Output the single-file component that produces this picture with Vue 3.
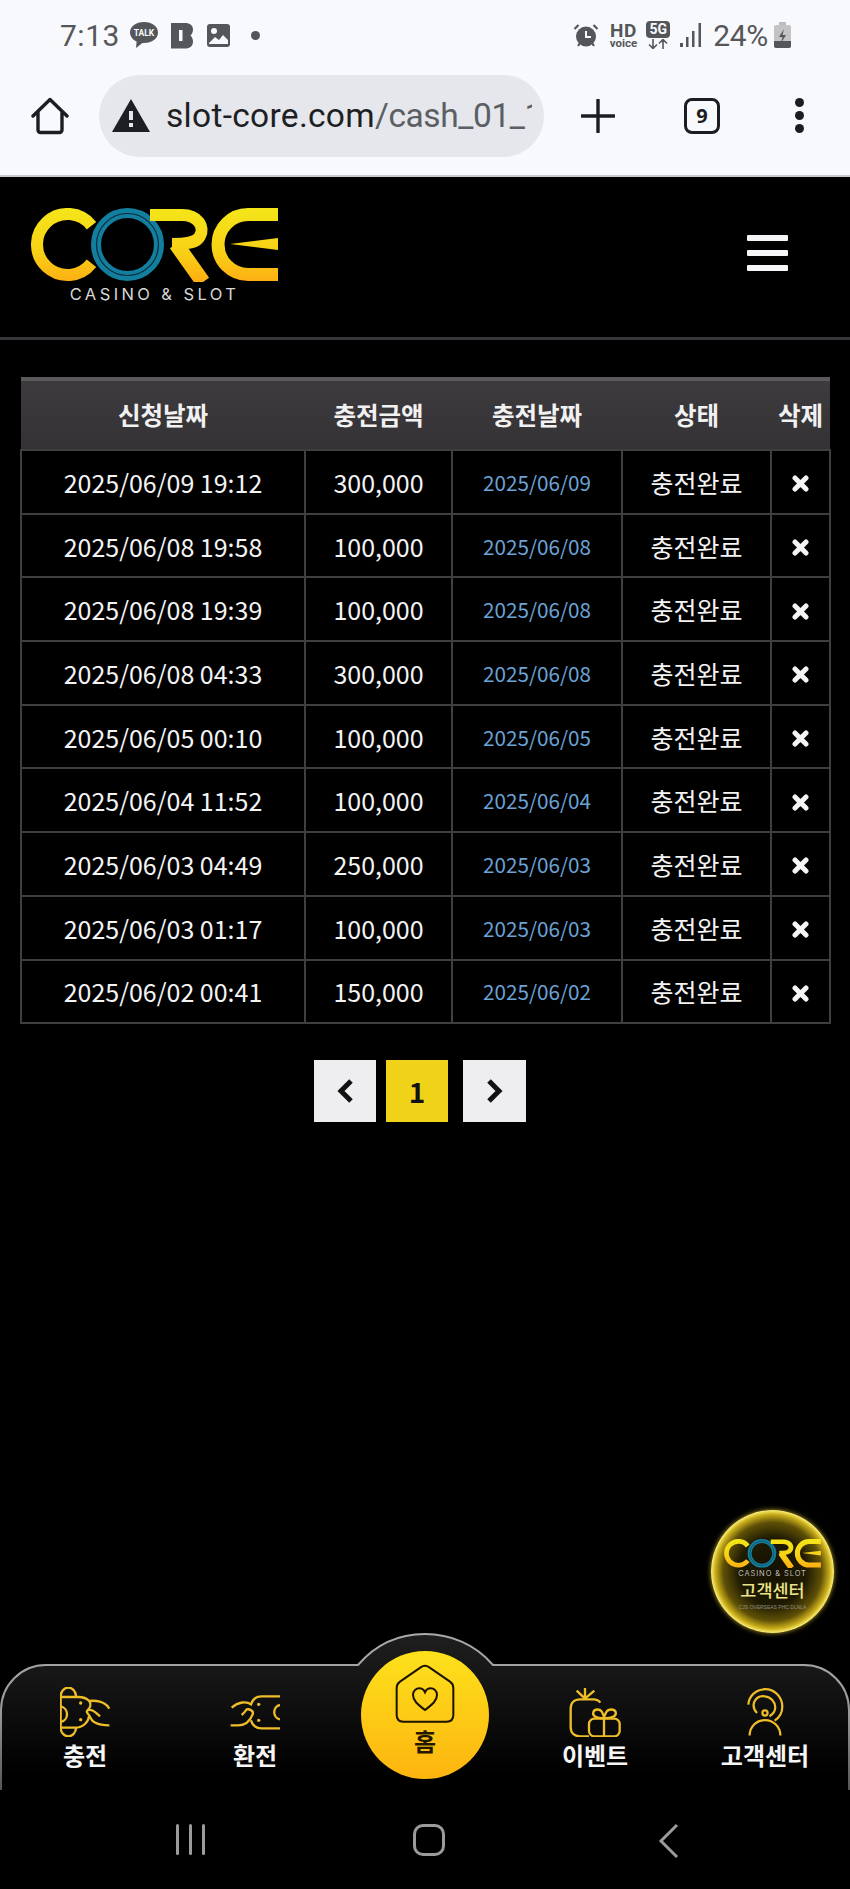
<script setup>
const rows = [
  { applied: '2025/06/09 19:12', amount: '300,000', charged: '2025/06/09' },
  { applied: '2025/06/08 19:58', amount: '100,000', charged: '2025/06/08' },
  { applied: '2025/06/08 19:39', amount: '100,000', charged: '2025/06/08' },
  { applied: '2025/06/08 04:33', amount: '300,000', charged: '2025/06/08' },
  { applied: '2025/06/05 00:10', amount: '100,000', charged: '2025/06/05' },
  { applied: '2025/06/04 11:52', amount: '100,000', charged: '2025/06/04' },
  { applied: '2025/06/03 04:49', amount: '250,000', charged: '2025/06/03' },
  { applied: '2025/06/03 01:17', amount: '100,000', charged: '2025/06/03' },
  { applied: '2025/06/02 00:41', amount: '150,000', charged: '2025/06/02' }
]
</script>

<template>
  <div class="page">
    <!-- phone status bar -->
    <div class="statusbar">
      <div class="status-left">
        <span class="clock">7:13</span>
        <svg class="ic-talk" width="30" height="28" viewBox="0 0 30 28">
          <path d="M15 1C7 1 1 5.600 1 11.500c0 3.900 2.800 7.200 6.600 9L7 27l6.400-5h1.600c8 0 14-4.600 14-10.500S23 1 15 1z" fill="#555659" />
          <text x="15" y="15" text-anchor="middle" class="talk-text">TALK</text>
        </svg>
        <svg class="ic-band" width="22" height="27" viewBox="0 0 22 27">
          <path d="M0 1h14c5 0 8 2.500 8 6.500 0 2.500-1 4.500-2.500 6 1.500 1.500 2.500 3.500 2.500 6 0 4.500-3 7-8 7H0z" fill="#555659" />
          <rect x="8" y="8" width="3.500" height="11" fill="#f8f9fd" />
        </svg>
        <svg class="ic-photo" width="25" height="25" viewBox="0 0 25 25">
          <rect x="1" y="1" width="23" height="23" rx="3" fill="#555659" />
          <circle cx="8" cy="8" r="3" fill="#f8f9fd" />
          <path d="M3 20l6-6 4 3 4-5 5 5v4H3z" fill="#f8f9fd" />
        </svg>
        <span class="dot"></span>
      </div>
      <div class="status-right">
        <svg width="26" height="25" viewBox="0 0 26 25">
          <circle cx="13" cy="13.500" r="10" fill="#555659" />
          <path d="M13 8v6h5" fill="none" stroke="#f8f9fd" stroke-width="2" />
          <path d="M1.500 6l4-4M24.500 6l-4-4M5 23l2-3M21 23l-2-3" stroke="#555659" stroke-width="2.200" />
        </svg>
        <div class="hd"><b>HD</b><span>voice</span></div>
        <div class="fiveg">
          <b>5G</b>
          <svg width="22" height="10" viewBox="0 0 22 10">
            <path d="M6 0v9M2 5.500L6 9.500l4-4M16 10V1M12 4.500L16 .5l4 4" fill="none" stroke="#555659" stroke-width="1.600" />
          </svg>
        </div>
        <svg width="22" height="24" viewBox="0 0 22 24">
          <rect x="0" y="20" width="3" height="4" fill="#555659" />
          <rect x="6" y="14" width="2.500" height="10" fill="#555659" />
          <rect x="12" y="8" width="2.500" height="16" fill="#555659" />
          <rect x="18.500" y="0" width="2.500" height="24" fill="#555659" />
        </svg>
        <span class="battery-text">24%</span>
        <svg width="17" height="26" viewBox="0 0 17 26">
          <rect x="5" y="0" width="7" height="3" fill="#bdbdbf" />
          <rect x="0" y="3" width="17" height="23" rx="2" fill="#c3c3c5" />
          <path d="M0 19h17v5a2 2 0 0 1-2 2H2a2 2 0 0 1-2-2z" fill="#555659" />
          <path d="M10 7l-5 8h3.500L7 21l5-8H8.500z" fill="#555659" />
        </svg>
      </div>
    </div>

    <!-- browser toolbar -->
    <div class="toolbar">
      <svg class="tb-home" width="38" height="38" viewBox="0 0 38 38">
        <path d="M2 19L19 2.500 36 19M7 15v18a2.500 2.500 0 0 0 2.500 2.500h19a2.500 2.500 0 0 0 2.500-2.500V15" fill="none" stroke="#1c1d20" stroke-width="3.400" stroke-linejoin="round" stroke-linecap="round" />
      </svg>
      <div class="urlbar">
        <svg width="38" height="33" viewBox="0 0 38 33">
          <path d="M19 0l19 33H0z" fill="#1e1f23" />
          <rect x="17" y="12" width="4" height="9" fill="#e5e7ec" />
          <rect x="17" y="24" width="4" height="4" fill="#e5e7ec" />
        </svg>
        <span class="url"><span class="url-host">slot-core.com</span>/cash_01_1</span>
      </div>
      <svg class="tb-plus" width="34" height="34" viewBox="0 0 34 34">
        <path d="M17 1v32M1 17h32" stroke="#1c1d20" stroke-width="3.400" stroke-linecap="round" />
      </svg>
      <div class="tabs">9</div>
      <div class="kebab"><i></i><i></i><i></i></div>
    </div>

    <!-- site header -->
    <header class="site-header">
      <div class="logo">
        <svg width="247" height="74" viewBox="31 207 247 74">
          <defs>
            <linearGradient id="goldLogo" gradientUnits="userSpaceOnUse" x1="0" y1="207" x2="0" y2="281">
              <stop offset="0" stop-color="#f4e619" />
              <stop offset="0.6" stop-color="#f8d016" />
              <stop offset="1" stop-color="#fdae12" />
            </linearGradient>
            <g id="coreMark">
              <path d="M91.500 224.700A30.500 30.500 0 1 0 91.500 262.300" fill="none" stroke="url(#goldLogo)" stroke-width="12" />
              <circle cx="127.500" cy="243.500" r="31.500" fill="none" stroke="#127f9f" stroke-width="10" />
              <circle cx="127.500" cy="243.500" r="31" fill="none" stroke="#0a2c3a" stroke-width="1.200" />
              <path d="M150 214H182C198 214 205 226 200 235C197 241 190 243 172 243" fill="none" stroke="url(#goldLogo)" stroke-width="12" />
              <path d="M176 243L203 281" fill="none" stroke="url(#goldLogo)" stroke-width="15" />
              <path d="M278 213.500H248A30 30 0 0 0 248 273.500H278" fill="none" stroke="url(#goldLogo)" stroke-width="13" />
              <path d="M230 243L278 237V249z" fill="url(#goldLogo)" />
            </g>
          </defs>
          <use href="#coreMark" />
        </svg>
        <span class="logo-sub">CASINO &amp; SLOT</span>
      </div>
      <div class="burger"><i></i><i></i><i></i></div>
    </header>

    <main class="content">
      <table class="history">
        <colgroup>
          <col class="c1" /><col class="c2" /><col class="c3" /><col class="c4" /><col class="c5" />
        </colgroup>
        <thead>
          <tr>
            <th>신청날짜</th>
            <th>충전금액</th>
            <th>충전날짜</th>
            <th>상태</th>
            <th>삭제</th>
          </tr>
        </thead>
        <tbody>
          <tr v-for="row in rows" :key="row.applied">
            <td>{{ row.applied }}</td>
            <td>{{ row.amount }}</td>
            <td class="blue">{{ row.charged }}</td>
            <td>충전완료</td>
            <td>
              <svg class="del" width="17" height="17" viewBox="0 0 17 17">
                <path d="M3 3l11 11M14 3L3 14" stroke="#f5f5f5" stroke-width="5" stroke-linecap="round" />
              </svg>
            </td>
          </tr>
        </tbody>
      </table>

      <div class="pager">
        <button class="pg">
          <svg width="20" height="26" viewBox="0 0 20 26"><path d="M16 3L6 13l10 10" fill="none" stroke="#111" stroke-width="5" /></svg>
        </button>
        <button class="pg current">1</button>
        <button class="pg next">
          <svg width="20" height="26" viewBox="0 0 20 26"><path d="M4 3l10 10L4 23" fill="none" stroke="#111" stroke-width="5" /></svg>
        </button>
      </div>
    </main>

    <!-- floating support badge -->
    <div class="support">
      <svg width="97" height="29" viewBox="31 207 247 74"><use href="#coreMark" /></svg>
      <span class="support-sub">CASINO &amp; SLOT</span>
      <span class="support-title">고객센터</span>
      <span class="support-tiny">CJS OVERSEAS PHC DLNLA</span>
    </div>

    <!-- bottom menu -->
    <nav class="bottomnav">
      <svg class="nav-bg" width="850" height="157" viewBox="0 1633 850 157">
        <defs>
          <linearGradient id="navFill" x1="0" y1="0" x2="0" y2="1">
            <stop offset="0" stop-color="#1f1f1f" />
            <stop offset="0.9" stop-color="#000" />
          </linearGradient>
          <linearGradient id="navLine" gradientUnits="userSpaceOnUse" x1="0" y1="1633" x2="0" y2="1790">
            <stop offset="0" stop-color="#aaa" />
            <stop offset="0.5" stop-color="#999" />
            <stop offset="1" stop-color="#555" />
          </linearGradient>
        </defs>
        <path d="M1 1790V1710A45 45 0 0 1 46 1665H358C376 1644 400 1634 425 1634C450 1634 475 1644 493 1665H804A45 45 0 0 1 849 1710V1790" fill="url(#navFill)" stroke="url(#navLine)" stroke-width="2" />
      </svg>

      <a class="nav-item">
        <svg width="50" height="50" viewBox="30 20 150 150" class="gold-line">
          <path d="M32 48A23 26 0 0 1 78 48M32 142A23 26 0 0 0 78 142M32 45V145" />
          <path d="M32 50H85C100 50 110 54 118 62C135 60 165 62 178 85" />
          <path d="M32 142H75C100 142 115 125 118 105C125 125 140 135 178 135" />
          <path d="M118 62C125 72 120 85 112 90C125 85 135 95 150 108M112 90C108 93 112 100 118 105" />
          <path d="M32 78A24 24 0 0 1 32 125" />
          <circle cx="92" cy="68" r="5" class="gold-dot" />
          <circle cx="92" cy="118" r="5" class="gold-dot" />
        </svg>
        <span>충전</span>
      </a>
      <a class="nav-item">
        <svg width="50" height="50" viewBox="540 18 150 150" class="gold-line">
          <path d="M690 46H635C615 46 607 58 603 70C590 60 565 62 545 80" />
          <path d="M690 142H635C615 142 606 130 603 118" />
          <path d="M542 133H565C585 133 600 120 608 100C612 90 600 84 590 85C585 92 580 98 575 102" />
          <path d="M690 72A22 22 0 0 0 690 115" />
          <circle cx="626" cy="70" r="5" class="gold-dot" />
          <circle cx="626" cy="118" r="5" class="gold-dot" />
        </svg>
        <span>환전</span>
      </a>
      <a class="nav-item home">
        <svg width="60" height="60" viewBox="150 102 180 180" class="home-line">
          <path d="M227 112Q240 103 253 112L315 155Q325 162 325 174V255Q325 275 305 275H175Q155 275 155 255V174Q155 162 165 155z" />
          <path d="M240 240C225 228 204 215 204 195C204 182 214 175 223 175C231 175 237 180 240 187C243 180 249 175 257 175C266 175 276 182 276 195C276 215 255 228 240 240z" />
        </svg>
        <span>홈</span>
      </a>
      <a class="nav-item">
        <svg width="52" height="50" viewBox="432 587 156 150" class="gold-line">
          <path d="M455 598L480 622M480 590V622M508 598L480 622" />
          <path d="M526 634C520 625 512 624 505 624H465C448 624 437 635 437 652V708C437 725 448 735 465 735H492" />
          <rect x="492" y="682" width="92" height="53" rx="16" />
          <path d="M537 682V735" />
          <path d="M537 680C510 682 502 672 505 662C509 652 525 652 531 662C535 670 537 675 537 680C537 675 540 670 544 662C550 652 568 652 572 662C575 672 565 682 537 680z" />
        </svg>
        <span>이벤트</span>
      </a>
      <a class="nav-item">
        <svg width="52" height="50" viewBox="942 587 156 156" class="gold-line">
          <path d="M968 642C970 612 995 594 1020 594C1050 594 1074 618 1074 648C1074 668 1066 682 1050 692" />
          <path d="M995 668C985 658 982 648 986 635C992 620 1006 614 1020 616C1038 618 1052 634 1052 650C1052 662 1044 672 1034 678" />
          <circle cx="1020" cy="668" r="8" />
          <path d="M972 738A48 48 0 0 1 1068 738" />
        </svg>
        <span>고객센터</span>
      </a>
    </nav>

    <!-- android navigation -->
    <div class="sysnav">
      <div class="recents"><i></i><i></i><i></i></div>
      <div class="sys-home"></div>
      <svg width="22" height="36" viewBox="0 0 22 36">
        <path d="M19 2L3 18l16 16" fill="none" stroke="#9b9b9d" stroke-width="3" />
      </svg>
    </div>
  </div>
</template>

<style scoped>
.page {
  position: relative;
  width: 850px;
  height: 1889px;
  overflow: hidden;
  display: flex;
  flex-direction: column;
  background: #000;
  color: #f3f3f3;
  font-family: "Noto Sans CJK KR", "Noto Sans", sans-serif;
}

/* status bar */
.statusbar {
  height: 68px;
  background: #f8f9fd;
  display: flex;
  justify-content: space-between;
  padding: 2px 59px 0 60px;
  box-sizing: border-box;
  font-family: Roboto, sans-serif;
  color: #555659;
}
.status-left,
.status-right {
  display: flex;
  align-items: center;
}
.clock {
  font-size: 30px;
  letter-spacing: 0.5px;
  width: 69px;
}
.talk-text {
  font-size: 8.500px;
  font-weight: 700;
  fill: #f8f9fd;
  font-family: Roboto, sans-serif;
}
.ic-band {
  margin-left: 12px;
}
.ic-photo {
  margin-left: 13px;
}
.dot {
  width: 9px;
  height: 9px;
  border-radius: 50%;
  background: #555659;
  margin-left: 20px;
}
.hd {
  display: flex;
  flex-direction: column;
  align-items: center;
  margin: 0 9px 0 11px;
  line-height: 1;
}
.hd b {
  font-size: 19px;
  letter-spacing: 0.5px;
  line-height: 15px;
}
.hd span {
  font-size: 11.500px;
  font-weight: 700;
  line-height: 10px;
}
.fiveg {
  display: flex;
  flex-direction: column;
  align-items: center;
  margin-right: 10px;
}
.fiveg b {
  background: #555659;
  color: #f8f9fd;
  border-radius: 4px;
  font-size: 14px;
  width: 24px;
  height: 17px;
  line-height: 17px;
  text-align: center;
}
.fiveg svg {
  margin-top: 1px;
}
.battery-text {
  font-size: 30px;
  margin: 0 6px 0 11px;
  letter-spacing: -0.3px;
}

/* browser toolbar */
.toolbar {
  height: 109px;
  box-sizing: border-box;
  border-bottom: 2px solid #c9c9cb;
  background: #f8f9fd;
  display: flex;
  align-items: center;
  padding: 0 0 12px 31px;
}
.urlbar {
  width: 445px;
  height: 82px;
  margin-left: 30px;
  margin-right: 37px;
  border-radius: 41px;
  background: #e5e7ec;
  display: flex;
  align-items: center;
  padding: 0 12px 0 13px;
  box-sizing: border-box;
  overflow: hidden;
  gap: 16px;
  flex-shrink: 0;
}
.urlbar svg {
  flex-shrink: 0;
}
.url {
  font-family: Roboto, sans-serif;
  font-size: 33.500px;
  letter-spacing: -0.4px;
  color: #5b5e63;
  white-space: nowrap;
  overflow: hidden;
  min-width: 0;
}
.url-host {
  color: #1e1f23;
  letter-spacing: 0.3px;
}
.tb-plus {
  flex-shrink: 0;
}
.tabs {
  width: 36px;
  height: 36px;
  margin-left: 69px;
  border: 3.500px solid #1c1d20;
  border-radius: 8px;
  font-family: "Noto Sans", sans-serif;
  font-size: 20px;
  font-weight: 700;
  color: #1c1d20;
  display: flex;
  align-items: center;
  justify-content: center;
  box-sizing: border-box;
}
.kebab {
  margin-left: 75px;
  display: flex;
  flex-direction: column;
  gap: 4px;
}
.kebab i {
  width: 9px;
  height: 9px;
  border-radius: 50%;
  background: #1c1d20;
}

/* site header */
.site-header {
  height: 163px;
  box-sizing: border-box;
  border-bottom: 3px solid #37353a;
  display: flex;
  justify-content: space-between;
  padding: 31px 62px 0 31px;
}
.logo {
  display: flex;
  flex-direction: column;
  align-items: center;
  width: 247px;
}
.logo svg {
  display: block;
}
.logo-sub {
  margin-top: 2px;
  font-family: Inter, sans-serif;
  font-size: 16.500px;
  line-height: 20px;
  letter-spacing: 3.400px;
  color: #d8d8d8;
  white-space: nowrap;
}
.burger {
  display: flex;
  flex-direction: column;
  gap: 9px;
  margin-top: 27px;
}
.burger i {
  display: block;
  width: 41px;
  height: 6px;
  border-radius: 1px;
  background: #f5f5f7;
}

/* table */
.content {
  flex: 1;
  padding: 37px 20px 0;
}
.history {
  width: 809px;
  border-collapse: collapse;
  table-layout: fixed;
  font-size: 25px;
}
.c1 { width: 284px; }
.c2 { width: 147px; }
.c3 { width: 170px; }
.c4 { width: 149px; }
.c5 { width: 59px; }
.history th {
  height: 71px;
  padding: 0 0 2px;
  font-weight: 700;
  font-size: 24.500px;
  background: linear-gradient(#3e3b3f, #353236);
  border-top: 4px solid #5b595c;
  box-sizing: border-box;
  color: #f1f1f1;
}
.history td {
  height: 61.700px;
  padding: 0;
  text-align: center;
  border: 2px solid #403e40;
  color: #f4f4f4;
}
.history td.blue {
  font-size: 20.700px;
  color: #6ba3d6;
}
.del {
  display: block;
  margin: 4px auto 0;
}

/* pager */
.pager {
  display: flex;
  justify-content: flex-start;
  margin: 36px 0 0 294px;
}
.pg {
  width: 62px;
  height: 62px;
  padding: 0;
  border: 0;
  background: #eeedf0;
  display: flex;
  align-items: center;
  justify-content: center;
}
.pg.current {
  margin-left: 10px;
  background: #f0d318;
  font-family: "Noto Sans CJK KR", sans-serif;
  font-size: 28px;
  font-weight: 700;
  color: #111;
}
.pg.next {
  margin-left: 15px;
  width: 63px;
}

/* floating badge */
.support {
  position: absolute;
  left: 711px;
  top: 1510px;
  width: 123px;
  height: 123px;
  box-sizing: border-box;
  border-radius: 50%;
  padding-top: 29px;
  display: flex;
  flex-direction: column;
  align-items: center;
  background: radial-gradient(circle closest-side, #151100 0%, #1f1a02 55%, #5f5007 80%, #c9ad1a 93%, #fff27a 100%);
  box-shadow: 0 0 5px rgba(255, 225, 60, 0.7);
}
.support-sub {
  font-family: Inter, sans-serif;
  font-size: 7.500px;
  line-height: 9px;
  letter-spacing: 0.9px;
  color: #bdbdbd;
  margin-top: 1px;
}
.support-title {
  font-size: 17.500px;
  line-height: 22px;
  font-weight: 500;
  color: #ece48a;
  margin-top: 1px;
}
.support-tiny {
  font-family: "Liberation Sans", sans-serif;
  font-size: 5px;
  line-height: 7px;
  color: #8e8e86;
  margin-top: 3px;
  white-space: nowrap;
}

/* bottom menu */
.bottomnav {
  position: relative;
  height: 125px;
  display: grid;
  grid-template-columns: repeat(5, 170px);
}
.nav-bg {
  position: absolute;
  left: 0;
  bottom: 0;
}
.nav-item {
  position: relative;
  display: flex;
  flex-direction: column;
  align-items: center;
  padding-top: 22px;
  font-size: 24px;
  font-weight: 700;
  line-height: 30px;
  color: #f6f6f6;
}
.nav-item span {
  margin-top: 3px;
}
.gold-line {
  fill: none;
  stroke: #eebd28;
  stroke-width: 7;
}
.gold-dot {
  fill: #eebd28;
  stroke: none;
}
.nav-item.home {
  width: 128px;
  height: 128px;
  box-sizing: border-box;
  margin: -14px 0 0 21px;
  padding-top: 13px;
  border-radius: 50%;
  background: linear-gradient(#fde11c, #fdb40f);
  font-size: 24px;
  line-height: 28px;
  color: #241700;
}
.nav-item.home span {
  margin-top: 3px;
}
.home-line {
  fill: none;
  stroke: #1b1200;
  stroke-width: 6;
}

/* system nav */
.sysnav {
  height: 99px;
  box-sizing: border-box;
  display: flex;
  align-items: flex-start;
  padding: 34px 0 0 176px;
}
.recents {
  display: flex;
  gap: 10px;
}
.recents i {
  display: block;
  width: 3px;
  height: 31px;
  border-radius: 2px;
  background: #9b9b9d;
}
.sys-home {
  width: 32px;
  height: 32px;
  margin-left: 208px;
  box-sizing: border-box;
  border: 3px solid #9b9b9d;
  border-radius: 10px;
}
.sysnav svg {
  margin: -1px 0 0 213px;
}
</style>
